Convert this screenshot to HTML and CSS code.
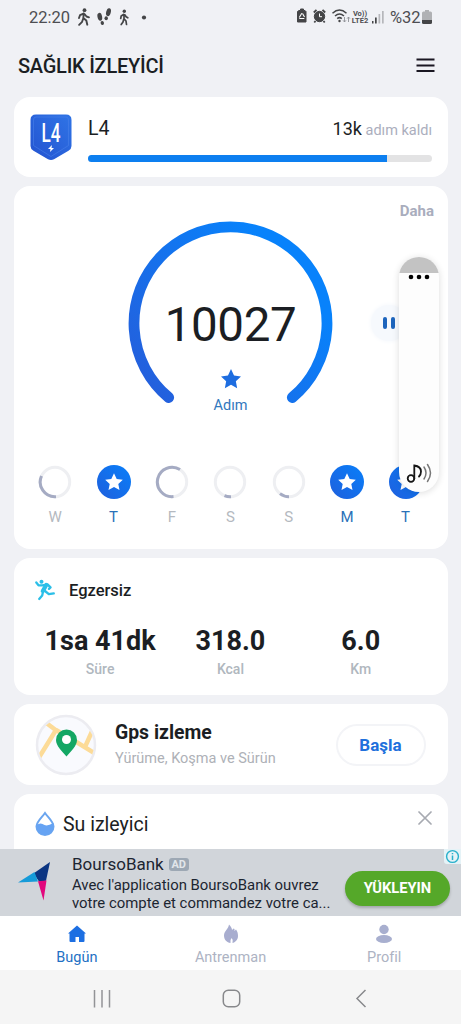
FILE: index.html
```html
<!DOCTYPE html>
<html lang="tr">
<head>
<meta charset="utf-8">
<title>Sağlık İzleyici</title>
<link rel="stylesheet" href="styles.css">
</head>
<body>
<svg width="0" height="0" class="defs">
  <defs>
    <linearGradient id="blue" x1="0" y1="1" x2="1" y2="0"><stop offset="0" stop-color="#1f5fdc"/><stop offset="1" stop-color="#087ffa"/></linearGradient>
    <linearGradient id="shieldg" x1="0" y1="1" x2="1" y2="0"><stop offset="0" stop-color="#2453d0"/><stop offset="1" stop-color="#2f74e6"/></linearGradient>
    <symbol id="star" viewBox="0 0 24 24"><path d="M12 1.2l3.3 7 7.6 1-5.6 5.3 1.4 7.6-6.7-3.7-6.7 3.7 1.4-7.6L1.1 9.200l7.600-1z" stroke-linejoin="round"/></symbol>
    <symbol id="badge" viewBox="0 0 34 34"><circle cx="17" cy="17" r="17" fill="url(#blue)"/><path d="M17 8.300l2.700 5.600 6.100.8-4.500 4.200 1.200 6.100-5.500-2.900-5.500 2.900 1.200-6.100-4.500-4.200 6.100-.8z" fill="#fff"/></symbol>
  </defs>
</svg>
<div class="screen">
  <header class="status">
    <span class="clock">22:20</span>
    <svg class="status-left" width="74" height="20" viewBox="0 0 74 20" fill="none" stroke="#444547" stroke-width="1.900" stroke-linecap="round" stroke-linejoin="round">
      <circle cx="7.500" cy="3.200" r="1.900" fill="#444547" stroke="none"/>
      <path d="M6.800 6.500L6.300 11l3 2.500 1 4.200M6.300 11.300l-1.200 3.500-3 3M6.500 6.600L3 8.200 2 11M7.500 7l2 2.500 2.500.8"/>
      <g fill="#444547" stroke="none"><ellipse cx="22.800" cy="9.800" rx="2.300" ry="4" transform="rotate(-12 22.800 9.800)"/><ellipse cx="25.300" cy="16" rx="1.700" ry="2" transform="rotate(-12 25.300 16)"/><ellipse cx="31.500" cy="5.200" rx="2.300" ry="4" transform="rotate(15 31.500 5.200)"/><ellipse cx="29.200" cy="11.300" rx="1.700" ry="2"/></g>
      <g stroke-width="1.700"><circle cx="47.300" cy="4.200" r="1.700" fill="#444547" stroke="none"/><path d="M47 7.500v4.200l2 2.300.5 3.500M46.800 12l-.8 3-1.800 2.500M46.500 7.500l-2.300 1.500-.5 2.500M47.800 7.800l1.300 2 1.700 1"/></g>
      <circle cx="67" cy="10.500" r="2.100" fill="#444547" stroke="none"/>
    </svg>
    <span class="grow"></span>
    <svg width="58" height="18" viewBox="0 0 58 18" fill="none" stroke="#444547">
      <path d="M3 2.500h1.500V1h3v1.500H9l1 1V14H1.500V3.500z" fill="#444547"/><path d="M5.800 5.200L3.300 9.500M6.500 5.500l2 3.500M3.300 10.500h5" stroke="#fff" stroke-width="1.100"/>
      <circle cx="23.500" cy="8.500" r="5.200" fill="#444547"/><path d="M23.500 5.500v3.200h2.500" stroke="#fff"/><path d="M17.800 4.500l2.700-2.700M29.200 4.500l-2.700-2.700M19.500 13l-1.200 1.500M27.500 13l1.200 1.500" stroke-width="1.800"/>
      <path d="M36.500 5.200q7-6.400 14 0M39 8q4.500-4 9 0M41.200 10.600q2.300-2 4.600 0" stroke-width="1.500"/><circle cx="43.500" cy="13" r="1.200" fill="#444547" stroke="none"/>
      <path d="M48.500 9v5m-1.500-1.700l1.500 1.700 1.500-1.700M52.500 14V9m-1.500 1.700L52.500 9 54 10.700" stroke="#909297" stroke-width=".9"/>
    </svg>
    <span class="lte"><span>Vo))</span><span>LTE2</span></span>
    <svg class="signal" width="14" height="14" viewBox="0 0 14 14"><path d="M1 11h1.500v2.500H1zM4 7.500h1.700v6H4z" fill="#444547"/><path d="M7.500 4h1.700v9.500H7.500zM11 1h1.700v12.500H11z" fill="#b6b7bb"/></svg>
    <span class="percent">%32</span>
    <svg class="battery" width="10" height="15" viewBox="0 0 10 15"><path d="M3 0h4v1.500h1.500Q10 1.500 10 3v8H0V3q0-1.500 1.500-1.500H3z" fill="#b0b1b4"/><path d="M0 10h10v2.500q0 1.500-1.500 1.500h-7Q0 14 0 12.500z" fill="#444547"/></svg>
  </header>
  <div class="title">
    <h1>SAĞLIK İZLEYİCİ</h1>
    <svg width="19" height="15" viewBox="0 0 19 15" stroke="#1a1722" stroke-width="2"><path d="M.5 1.500h18M.5 7.500h18M.5 13h18"/></svg>
  </div>
  <main class="cards">
    <section class="card level">
      <svg class="shield" width="42" height="47" viewBox="0 0 42 47">
        <path d="M6 .5h30q5.500 0 5.500 5.500v26q0 3-3 4.700L24 45.300q-3 1.500-6 0L3.500 36.700Q.5 35 .5 32V6Q.5.500 6 .5z" fill="url(#shieldg)"/>
        <path d="M6 3h30q2.500 0 2.500 3v25.500L21 42.500 3.500 31.500V6q0-3 2.500-3z" fill="none" stroke="#4a82ea" stroke-width=".8" opacity=".7"/>
        <text class="shield-text" x="21" y="28" text-anchor="middle" textLength="19" lengthAdjust="spacingAndGlyphs">L4</text>
        <path d="M22 31l-4 4h2.500L20 38l4-4h-2.500z" fill="#fff"/>
      </svg>
      <div class="level-main">
        <div class="level-row"><span class="level-name">L4</span><span class="level-left"><b>13k</b> adım kaldı</span></div>
        <div class="bar"><div class="bar-fill"></div></div>
      </div>
    </section>

    <section class="card steps">
      <div class="more">Daha</div>
      <div class="dial">
        <svg class="arc" width="206" height="190" viewBox="0 0 206 190"><defs><linearGradient id="arcg" gradientUnits="userSpaceOnUse" x1="20" y1="170" x2="160" y2="50"><stop offset="0" stop-color="#245fdc"/><stop offset="1" stop-color="#0882fb"/></linearGradient></defs><path d="M40.700 176.500A96.500 96.500 0 1 1 164.300 176.500" fill="none" stroke="url(#arcg)" stroke-width="10.800" stroke-linecap="round"/></svg>
        <div class="dial-text">
          <span class="count">10027</span>
          <svg width="24" height="22" fill="#1d6de0"><use href="#star"/></svg>
          <span class="unit">Adım</span>
        </div>
      </div>
      <div class="week">
        <div><svg width="34" height="34" viewBox="0 0 34 34" class="ring"><circle cx="17" cy="17" r="14.700"/><path d="M18 31.700A14.700 14.700 0 0 1 3.500 11"/></svg><span>W</span></div>
        <div class="on"><svg width="34" height="34"><use href="#badge"/></svg><span>T</span></div>
        <div><svg width="34" height="34" viewBox="0 0 34 34" class="ring"><circle cx="17" cy="17" r="14.700"/><path d="M18.500 31.600A14.700 14.700 0 1 1 25 4.600"/></svg><span>F</span></div>
        <div><svg width="34" height="34" viewBox="0 0 34 34" class="ring"><circle cx="17" cy="17" r="14.700"/><path d="M18 31.700A14.700 14.700 0 0 1 11.500 30.600"/></svg><span>S</span></div>
        <div><svg width="34" height="34" viewBox="0 0 34 34" class="ring"><circle cx="17" cy="17" r="14.700"/><path d="M17 31.700A14.700 14.700 0 0 1 8 28.600"/></svg><span>S</span></div>
        <div class="on"><svg width="34" height="34"><use href="#badge"/></svg><span>M</span></div>
        <div class="on"><svg width="34" height="34"><use href="#badge"/></svg><span>T</span></div>
      </div>
      <div class="pause"><i></i><i></i></div>
      <div class="volume">
        <div class="volume-top"></div>
        <svg class="dots" width="22" height="6"><circle cx="3" cy="3" r="2.300"/><circle cx="11" cy="3" r="2.300"/><circle cx="19" cy="3" r="2.300"/></svg>
        <svg class="note" width="26" height="22" viewBox="0 0 26 22" fill="none" stroke="#161616" stroke-width="1.800" stroke-linecap="round"><circle cx="5" cy="16.500" r="3.300"/><path d="M8.300 16.500V3.500Q15 4.500 15 9.500q0 3-2 5"/><path d="M18 5q4 6 0 12M21.500 2.500q6 8.500 0 17" stroke="#777" stroke-width="1.500"/></svg>
      </div>
    </section>

    <section class="card exercise">
      <div class="ex-head">
        <svg width="21" height="22" viewBox="0 0 21 22" fill="none" stroke="#2bbfe8" stroke-width="2.300" stroke-linecap="round" stroke-linejoin="round"><circle cx="6.500" cy="2.700" r="2" fill="#2bbfe8" stroke="none"/><path d="M1.300 3.500l2.200 2.800 4 .1 5-1 3 3-1.500 1.500"/><path d="M11.300 6l-3.500 6" stroke-width="4.200"/><path d="M10 12l3.800 3.200 5-.8M8 12.800l-.8 3.700-3 3.500"/></svg>
        <span>Egzersiz</span>
      </div>
      <div class="stats">
        <div><b>1sa 41dk</b><span>Süre</span></div>
        <div><b>318.0</b><span>Kcal</span></div>
        <div><b>6.0</b><span>Km</span></div>
      </div>
    </section>

    <section class="card gps">
      <svg width="64" height="64" viewBox="0 0 64 64">
        <defs><clipPath id="mapclip"><circle cx="32" cy="32" r="28"/></clipPath></defs>
        <circle cx="32" cy="32" r="29" fill="#f9fafe" stroke="#ececf1" stroke-width="2.500"/>
        <g clip-path="url(#mapclip)" fill="none" stroke="#fcdb98" stroke-width="4.500"><path d="M11 9l12 9M19 14l-1 1M22 17L4 46M22 17l22 13 18 11M51 34l9-20"/></g>
        <path d="M32.500 43.500C28 38 22 33 22 27a10.500 10.500 0 0 1 21 0c0 6-6 11-10.500 16.500z" fill="#14a764"/><circle cx="32.500" cy="26.500" r="4.500" fill="#fff"/>
      </svg>
      <div class="gps-text"><b>Gps izleme</b><span>Yürüme, Koşma ve Sürün</span></div>
      <div class="start">Başla</div>
    </section>

    <section class="card water">
      <svg width="20" height="25" viewBox="0 0 20 25"><path d="M10 2C7 6.500 1.500 10.500 1.500 15.500a8.500 8.500 0 0 0 17 0C18.500 10.500 13 6.500 10 2z" fill="#fff" stroke="#6aa5ef" stroke-width="2"/><path d="M1.500 14q4-3 8 0 3 1.500 9-2v3.500a8.500 8.500 0 0 1-17 0z" fill="#66a3f3"/></svg>
      <span>Su izleyici</span>
      <svg class="close" width="14" height="14" viewBox="0 0 14 14" stroke="#a7aab1" stroke-width="1.700" stroke-linecap="round"><path d="M1 1l12 12M13 1L1 13"/></svg>
    </section>
  </main>

  <aside class="ad">
    <svg class="ad-logo" width="34" height="40" viewBox="0 0 34 40"><path d="M32 0L15.500 11.500 21 19.500l7-.8z" fill="#0b3582"/><path d="M16.500 10L0 20.500l20-1z" fill="#169bd9"/><path d="M20 19.300l8.500-.8L25.500 38.500z" fill="#e2087d"/></svg>
    <div class="ad-copy">
      <div class="ad-name"><span>BoursoBank</span><em>AD</em></div>
      <p>Avec l'application BoursoBank ouvrez<br>votre compte et commandez votre ca...</p>
    </div>
    <div class="install">YÜKLEYIN</div>
    <svg class="info" width="17" height="15" viewBox="0 0 17 15"><path d="M0 0h17v15H3q-3 0-3-3z" fill="#e5f3f7"/><circle cx="8.500" cy="7.500" r="5.900" fill="none" stroke="#29b0cb" stroke-width="1.400"/><path d="M8.500 6.500v4.500M8.500 3.900v1.400" stroke="#29b0cb" stroke-width="1.500"/></svg>
  </aside>

  <nav class="tabs">
    <div class="active"><svg width="20" height="20" viewBox="0 0 20 20"><path d="M10 1.500l9 8h-1.500V17q0 1-1 1H12v-5H8.500v5h-5q-1 0-1-1V9.500H1z" fill="#1d6fe2"/></svg><span>Bugün</span></div>
    <div><svg width="20" height="20" viewBox="0 0 20 20"><path d="M8 .5c2 2 3 4 3 5.500l1.500-1.500 1 .5v2L15 5.500c1.500 2 2 4 2 6.500 0 4-3 6.500-5.500 7q1-3-.8-5-2 2-1.200 5C6 18.500 3 16 3 11.500 3 7 7.500 5 8 .5z" fill="#a8adcf"/></svg><span>Antrenman</span></div>
    <div><svg width="20" height="20" viewBox="0 0 20 20" fill="#a8afcf"><circle cx="10" cy="5.500" r="4.700"/><ellipse cx="10" cy="15" rx="8" ry="4"/></svg><span>Profil</span></div>
  </nav>
  <footer class="system">
    <svg width="19" height="18" viewBox="0 0 19 18" stroke="#929396" stroke-width="1.500"><path d="M1.500 0v17.500M9 0v17.500M16.500 0v17.500"/></svg>
    <svg class="home" width="19" height="19" viewBox="0 0 19 19" fill="none" stroke="#88898c" stroke-width="1.500"><rect x="1.300" y="1.300" width="16.400" height="16.400" rx="5"/></svg>
    <svg width="12" height="19" viewBox="0 0 12 19" fill="none" stroke="#88898c" stroke-width="1.500"><path d="M10.500 1L2 9.500l8.500 8.500"/></svg>
  </footer>
</div>
</body>
</html>
```
FILE: styles.css
```css
* { box-sizing: border-box; }
body { margin: 0; font-family: Roboto, "Noto Sans", sans-serif; color: #1b1e23; background: #f0f1f5; }
svg { display: block; flex: none; }
.defs { position: absolute; }
.screen { width: 461px; height: 1024px; display: flex; flex-direction: column; overflow: hidden; }

.status { height: 34px; flex: none; display: flex; align-items: center; padding: 0 29px 0 29px; color: #4d4e52; white-space: nowrap; }
.clock { font-size: 16.500px; width: 48px; }
.grow { flex: 1; }
.lte { display: flex; flex-direction: column; align-items: center; width: 18px; margin-left: -3px; font-size: 7.500px; line-height: 7.500px; font-weight: 700; }
.signal { margin-left: 2px; }
.percent { font-size: 16.500px; margin-left: 5px; width: 32px; }

.title { height: 63px; flex: none; display: flex; align-items: center; justify-content: space-between; padding: 0 26px 0 18px; }
.title h1 { margin: 0; font-size: 20px; line-height: 24px; font-weight: 500; letter-spacing: -.25px; }

.cards { flex: 1; min-height: 0; overflow: hidden; padding: 0 13.500px; display: flex; flex-direction: column; gap: 9px; }
.card { background: #fff; border-radius: 16px; flex: none; }

.level { height: 80px; display: flex; padding: 17px 15.500px 0 16.500px; gap: 16px; }
.shield-text { font: 500 25px Roboto, sans-serif; fill: #fff; }
.level-main { flex: 1; padding-top: 3px; }
.level-row { display: flex; justify-content: space-between; align-items: baseline; line-height: 24px; }
.level-name { font-size: 19.500px; }
.level-left { font-size: 14.500px; color: #abaebd; }
.level-left b { font-size: 18px; font-weight: 400; color: #1b1e23; }
.bar { margin-top: 12px; height: 7px; border-radius: 4px; background: #e3e3e4; overflow: hidden; }
.bar-fill { width: 87%; height: 7px; background: #0d7ff0; }

.steps { height: 363px; position: relative; padding-top: 15px; }
.more { font-size: 15px; line-height: 20px; font-weight: 700; color: #a9adbd; text-align: right; padding-right: 13.500px; }
.dial { display: grid; justify-content: center; height: 190px; }
.arc, .dial-text { grid-area: 1 / 1; }
.dial-text { display: flex; flex-direction: column; align-items: center; padding-top: 76px; }
.count { font-size: 47.500px; line-height: 56px; letter-spacing: -.4px; margin-bottom: 15px; }
.unit { font-size: 14.500px; line-height: 20px; margin-top: 6px; color: #3178bd; }
.week { display: grid; grid-template-columns: repeat(7, 58.400px); padding: 54px 0 0 12.500px; }
.week div { display: flex; flex-direction: column; align-items: center; gap: 8px; font-size: 15px; line-height: 20px; color: #b4b9c0; }
.week .on { color: #2a71b8; }
.ring { fill: none; stroke: #eeeff2; stroke-width: 3; }
.ring path { stroke: #a5abc3; }
.pause { position: absolute; left: 357.500px; top: 119px; width: 36px; height: 36px; border-radius: 50%; background: #f6f9fd; box-shadow: 0 0 5px #f2f6fb; display: flex; gap: 4px; padding: 12px 0 0 12px; }
.pause i { width: 4px; height: 12px; border-radius: 2px; background: #1d65bd; }
.volume { position: absolute; left: 385.500px; top: 71px; width: 40px; height: 235px; border-radius: 20px; background: #fdfdfd; box-shadow: 0 1px 7px rgba(0,0,0,.14); overflow: hidden; display: flex; flex-direction: column; align-items: center; }
.volume-top { width: 40px; height: 16px; background: #c3c3c3; }
.dots { margin-top: 1px; }
.note { margin-top: auto; margin-bottom: 8px; }

.exercise { height: 137px; padding: 21px 21.500px 0; }
.ex-head { display: flex; gap: 13px; line-height: 24px; font-size: 16.500px; font-weight: 500; }
.stats { display: grid; grid-template-columns: repeat(3, 130.300px); margin-top: 21px; text-align: center; }
.stats div { display: flex; flex-direction: column; }
.stats b { font-size: 27px; line-height: 34px; font-weight: 700; }
.stats span { font-size: 14px; line-height: 20px; margin-top: 1px; font-weight: 500; color: #b0b7be; }

.gps { height: 81px; display: flex; align-items: flex-start; padding: 9px 22px 0 20.500px; }
.gps-text { flex: 1; display: flex; flex-direction: column; padding: 8px 0 0 17px; }
.gps-text b { font-size: 19.400px; line-height: 24px; font-weight: 700; }
.gps-text span { font-size: 14.500px; line-height: 20px; margin-top: 4px; color: #aeb1b7; }
.start { margin-top: 11px; width: 90px; height: 42px; border: 2px solid #f3f4f7; border-radius: 21px; color: #2170dc; font-size: 17px; line-height: 39px; font-weight: 700; text-align: center; }

.water { height: 81px; display: flex; align-items: flex-start; padding: 17px 16px 0 21.500px; font-size: 19.500px; }
.water span { flex: 1; padding-left: 8px; line-height: 28px; }

.ad { position: relative; height: 67px; flex: none; background: #d1d5da; display: flex; color: #1c2531; }
.ad-logo { margin: 13px 0 0 18px; }
.ad-copy { flex: 1; padding: 4px 0 0 20px; white-space: nowrap; }
.ad-name { display: flex; align-items: center; gap: 5px; font-size: 17px; line-height: 22px; }
.ad-name em { font-size: 11px; font-style: normal; font-weight: 700; line-height: 13px; width: 20px; border-radius: 3px; background: #9da8b4; color: #e2e6ea; text-align: center; }
.ad p { margin: 1px 0 0; font-size: 14.900px; line-height: 18px; }
.install { width: 105px; height: 35px; margin: 22px 11px 0 0; border-radius: 18px; background: #55a829; box-shadow: 0 2px 3px rgba(0,0,0,.22); color: #fff; font-size: 14.700px; font-weight: 700; line-height: 35px; text-align: center; }
.info { position: absolute; top: 0; right: 0; }

.tabs { height: 54px; flex: none; background: #fff; display: grid; grid-template-columns: repeat(3, 153.700px); }
.tabs div { display: flex; flex-direction: column; align-items: center; padding-top: 8px; gap: 4px; font-size: 14.500px; line-height: 20px; color: #adb3c3; }
.tabs .active { color: #2270c4; }
.system { height: 54px; flex: none; background: #f5f5f5; display: flex; align-items: center; justify-content: space-between; padding: 3px 94px 0 93px; }
.home { margin-right: 4px; }
```
